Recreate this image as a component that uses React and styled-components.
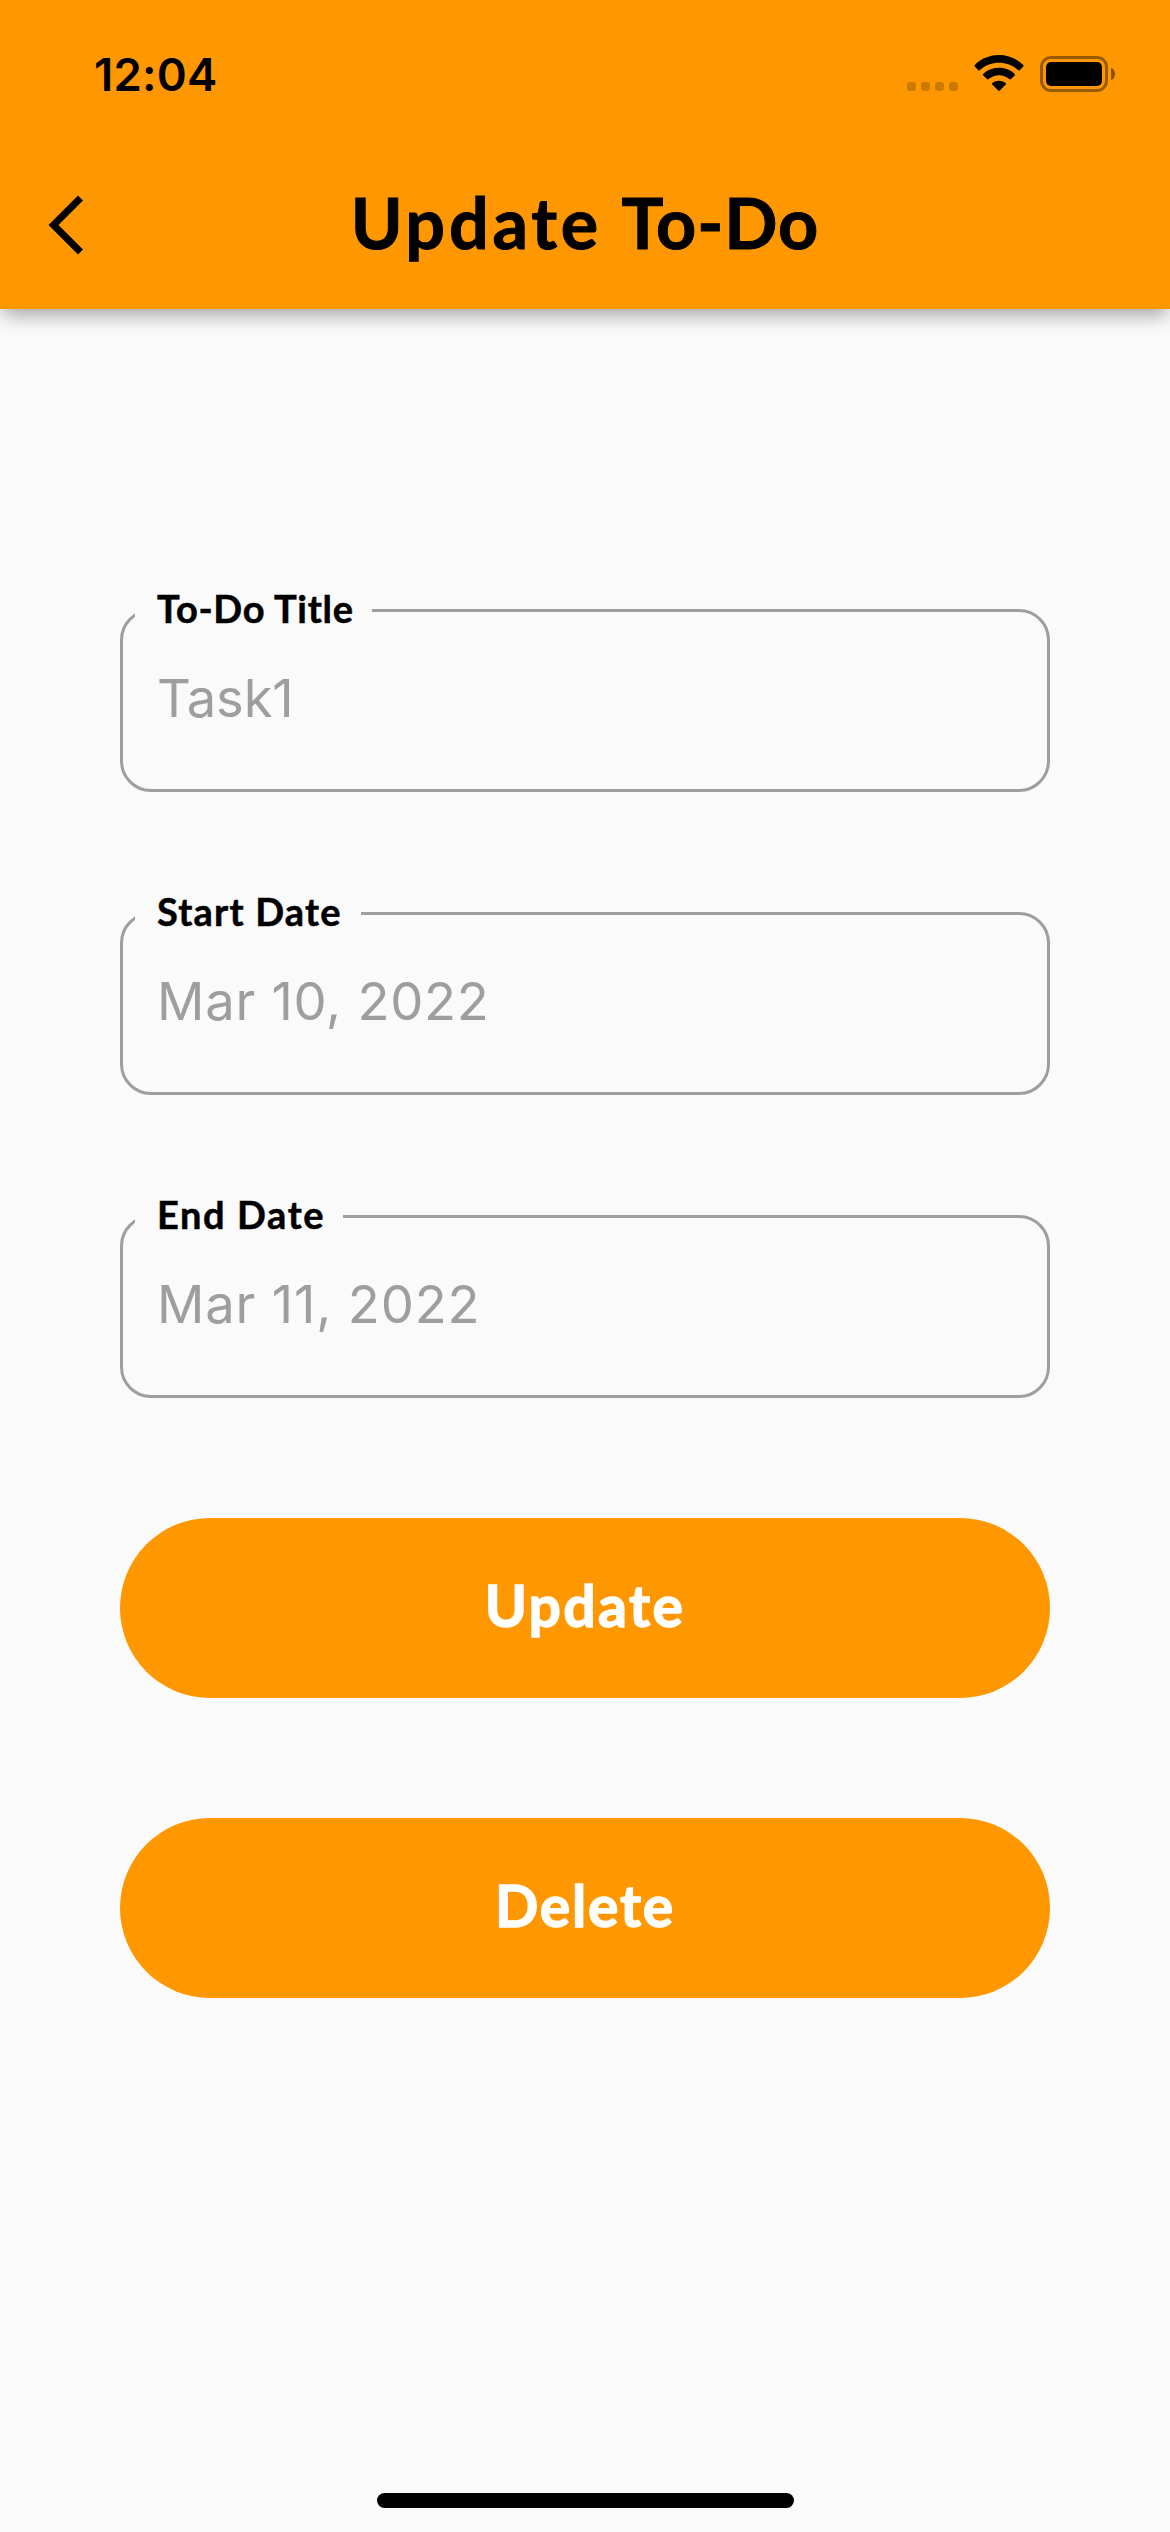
import React from 'react';
import styled, { createGlobalStyle } from 'styled-components';

const GlobalStyle = createGlobalStyle`
  * { box-sizing: border-box; }
  html, body { margin: 0; padding: 0; background: #fafafa; }
`;

const Screen = styled.div`
  width: 1170px;
  height: 2532px;
  display: flex;
  flex-direction: column;
  background: #fafafa;
  overflow: hidden;
  font-family: Lato, 'Liberation Sans', sans-serif;
`;

const Header = styled.header`
  flex: none;
  height: 309px;
  background: #ff9800;
  box-shadow: 0 9px 18px -3px rgba(0, 0, 0, 0.3), 0 6px 24px rgba(0, 0, 0, 0.06);
`;

const StatusBar = styled.div`
  height: 141px;
  padding: 47px 55px 0 94px;
  display: flex;
  justify-content: space-between;
  align-items: flex-start;
`;

const Clock = styled.span`
  font: 600 45.5px/56px Inter, sans-serif;
  letter-spacing: 0.2px;
  color: #000;
`;

const StatusIcons = styled.div`
  display: flex;
  align-items: flex-end;
  height: 45px;
`;

const SignalDots = styled.div`
  display: flex;
  gap: 5px;
  margin-right: 16px;
  padding-bottom: 1px;
`;

const Dot = styled.i`
  width: 9px;
  height: 9px;
  border-radius: 3px;
  background: rgba(0, 0, 0, 0.2);
`;

const WifiIcon = styled.svg`
  width: 50px;
  height: 37px;
  margin-right: 16px;
`;

const Battery = styled.div`
  display: flex;
  align-items: center;
  gap: 3px;
`;

const BatteryShell = styled.div`
  width: 68px;
  height: 36px;
  padding: 3px;
  border: 3px solid rgba(0, 0, 0, 0.4);
  border-radius: 11px;
`;

const BatteryLevel = styled.div`
  height: 24px;
  border-radius: 5px;
  background: #000;
`;

const BatteryCap = styled.div`
  width: 4px;
  height: 12px;
  border-radius: 0 4px 4px 0 / 0 6px 6px 0;
  background: rgba(0, 0, 0, 0.45);
`;

const AppBar = styled.div`
  height: 168px;
  display: grid;
  grid-template-columns: 168px 1fr 168px;
  align-items: center;
`;

const BackButton = styled.button`
  padding: 0 0 0 48px;
  border: 0;
  background: none;
  display: flex;
`;

const Title = styled.h1`
  margin: 0;
  padding-bottom: 6px;
  text-align: center;
  white-space: nowrap;
  font-size: 70px;
  line-height: 84px;
  font-weight: 700;
  letter-spacing: 2.4px;
  color: #000;
  -webkit-text-stroke: 1px #000;
`;

const TitleWord = styled.span`
  letter-spacing: ${(p) => p.$spacing}px;
`;

const Form = styled.form`
  flex: 1;
  padding: 281px 120px 0;
  display: flex;
  flex-direction: column;
`;

const Field = styled.fieldset`
  min-width: 0;
  height: 202px;
  margin: 0 0 101px;
  padding: 0 34px;
  border: 3px solid #9e9e9e;
  border-radius: 31px;
`;

const Label = styled.legend`
  width: ${(p) => p.$width}px;
  height: 41px;
  margin-left: -22px;
  padding: 0 0 0 22px;
  white-space: nowrap;
  font-size: 38px;
  line-height: 37px;
  font-weight: 700;
  letter-spacing: ${(p) => p.$spacing}px;
  color: #000;
  -webkit-text-stroke: 0.5px #000;
`;

const Value = styled.div`
  padding-top: 35px;
  font: 400 52.5px/64px Inter, sans-serif;
  letter-spacing: ${(p) => p.$spacing}px;
  white-space: nowrap;
  color: #9e9e9e;
`;

const Actions = styled.div`
  display: flex;
  flex-direction: column;
  gap: 120px;
  margin-top: 19px;
`;

const PillButton = styled.button`
  height: 180px;
  padding: 0 0 6px;
  border: 0;
  border-radius: 90px;
  background: #ff9800;
  color: #fff;
  font: 700 57px/68px Lato, sans-serif;
  letter-spacing: ${(p) => p.$spacing}px;
  -webkit-text-stroke: 1.4px #fff;
`;

const HomeIndicator = styled.div`
  flex: none;
  align-self: center;
  width: 417px;
  height: 15px;
  margin-bottom: 24px;
  border-radius: 8px;
  background: #000;
`;

const fields = [
  { label: 'To-Do Title', value: 'Task1', width: 237, spacing: 0.7, valueSpacing: -0.2 },
  { label: 'Start Date', value: 'Mar 10, 2022', width: 226, spacing: 1.2, valueSpacing: 0.75 },
  { label: 'End Date', value: 'Mar 11, 2022', width: 208, spacing: 1.6, valueSpacing: 0.85 },
];

export default function App() {
  return (
    <Screen>
      <GlobalStyle />
      <Header>
        <StatusBar>
          <Clock>12:04</Clock>
          <StatusIcons>
            <SignalDots>
              <Dot /><Dot /><Dot /><Dot />
            </SignalDots>
            <WifiIcon viewBox="0 0 50 37">
              <path d="M.8 11.6Q-.1 10.8.8 9.9C14-3.2 36-3.2 49.2 9.9Q50.1 10.8 49.2 11.6L45.7 15.2Q44.9 16 44 15.1C33.2 5.4 16.8 5.4 6 15.1Q5.1 16 4.3 15.2Z" />
              <path d="M9.3 20.4Q8.5 19.5 9.4 18.7C18 10.9 32 10.9 40.6 18.7Q41.5 19.5 40.7 20.4L37 24Q36.2 24.8 35.3 24C29.5 18.9 20.5 18.9 14.7 24Q13.8 24.8 13 24Z" />
              <path d="M18.2 29.5Q17.4 28.6 18.4 27.9C22.3 24.9 27.7 24.9 31.6 27.9Q32.6 28.6 31.8 29.5L25.8 35.6Q25 36.4 24.2 35.6Z" />
            </WifiIcon>
            <Battery>
              <BatteryShell><BatteryLevel /></BatteryShell>
              <BatteryCap />
            </Battery>
          </StatusIcons>
        </StatusBar>
        <AppBar>
          <BackButton type="button" aria-label="Back">
            <svg width="36" height="60" viewBox="0 0 36 60">
              <path d="M30 .5L35 5.5L10.5 30L35 54.5L30 59.5L.5 30Z" />
            </svg>
          </BackButton>
          <Title>
            <TitleWord $spacing={3.8}>Update</TitleWord>{' '}
            <TitleWord $spacing={1}>To-Do</TitleWord>
          </Title>
        </AppBar>
      </Header>
      <Form>
        {fields.map((f) => (
          <Field key={f.label}>
            <Label $width={f.width} $spacing={f.spacing}>{f.label}</Label>
            <Value $spacing={f.valueSpacing}>{f.value}</Value>
          </Field>
        ))}
        <Actions>
          <PillButton type="button" $spacing={2.4}>Update</PillButton>
          <PillButton type="button" $spacing={1.8}>Delete</PillButton>
        </Actions>
      </Form>
      <HomeIndicator />
    </Screen>
  );
}
